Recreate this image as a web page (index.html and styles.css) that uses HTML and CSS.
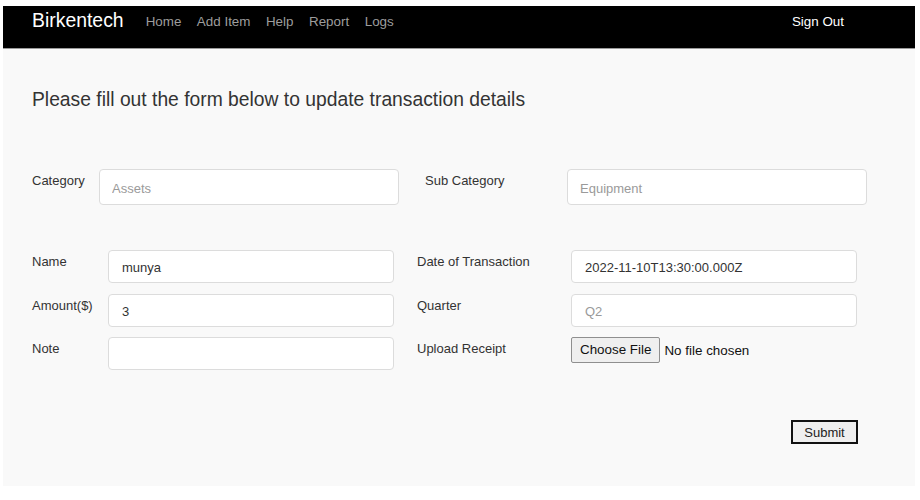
FILE: index.html
```html
<!DOCTYPE html>
<html lang="en">
<head>
<meta charset="utf-8">
<title>Birkentech - Update Transaction</title>
<link rel="stylesheet" href="styles.css">
</head>
<body>
<div class="page">
  <nav class="navbar">
    <a class="brand" href="#">Birkentech</a>
    <ul class="nav-links">
      <li><a href="#">Home</a></li>
      <li><a href="#">Add Item</a></li>
      <li><a href="#">Help</a></li>
      <li><a href="#">Report</a></li>
      <li><a href="#">Logs</a></li>
    </ul>
    <a class="signout" href="#">Sign Out</a>
  </nav>
  <main class="content">
    <h1 class="title">Please fill out the form below to update transaction details</h1>
    <form class="form">
      <div class="row row-top">
        <label class="lbl">Category</label>
        <input class="field" type="text" placeholder="Assets">
        <label class="lbl">Sub Category</label>
        <input class="field" type="text" placeholder="Equipment">
      </div>
      <div class="rows">
        <div class="row row-main">
          <label class="lbl">Name</label>
          <input class="field" type="text" value="munya">
          <label class="lbl">Date of Transaction</label>
          <input class="field" type="text" value="2022-11-10T13:30:00.000Z">
        </div>
        <div class="row row-main">
          <label class="lbl">Amount($)</label>
          <input class="field" type="text" value="3">
          <label class="lbl">Quarter</label>
          <input class="field" type="text" placeholder="Q2">
        </div>
        <div class="row row-main">
          <label class="lbl">Note</label>
          <input class="field" type="text">
          <label class="lbl">Upload Receipt</label>
          <div class="file">
            <span class="file-btn">Choose File</span>
            <span class="file-text">No file chosen</span>
          </div>
        </div>
      </div>
      <div class="actions">
        <button class="submit" type="button">Submit</button>
      </div>
    </form>
  </main>
</div>
</body>
</html>
```

FILE: styles.css
```css
* { box-sizing: border-box; }

html, body {
  margin: 0;
  padding: 0;
  background: #ffffff;
}

body {
  font-family: "Liberation Sans", Arial, sans-serif;
  color: #333333;
}

.page {
  padding: 6px 5px 14px 3px;
}

.navbar {
  height: 43px;
  background: #000000;
  display: flex;
  align-items: center;
  padding: 0 0 0 29px;
  border-bottom: 1px solid #9a9a9a;
}

.brand {
  color: #ffffff;
  text-decoration: none;
  font-size: 19.4px;
  margin-top: -13px;
}

.nav-links {
  list-style: none;
  display: flex;
  margin: -12px 0 0 22px;
  padding: 0;
}

.nav-links li a {
  color: #9d9d9d;
  text-decoration: none;
  font-size: 13.4px;
  margin-right: 15.5px;
}

.signout {
  margin-left: auto;
  margin-right: 71px;
  margin-top: -12px;
  color: #ffffff;
  text-decoration: none;
  font-size: 13.4px;
}

.content {
  background: #f9f9f9;
  padding: 39px 0 42px 29px;
  height: 437px;
}

.title {
  margin: 0;
  font-size: 19.3px;
  font-weight: normal;
  line-height: 24px;
  color: #333333;
}

.form {
  margin-top: 57px;
}

.row {
  display: grid;
  align-items: start;
}

.row-top {
  grid-template-columns: 67px 300px 26px 142px 300px;
}
.row-top > :nth-child(3) { grid-column: 4; }

.rows {
  margin-top: 45px;
  display: flex;
  flex-direction: column;
  gap: 10.5px;
}

.row-main {
  grid-template-columns: 76px 286px 23px 154px 286px;
}
.row-main > :nth-child(3) { grid-column: 4; }

.lbl {
  font-size: 13px;
  line-height: 16px;
  padding-top: 4px;
  color: #333333;
}

.row-top .lbl { padding-top: 4px; }

.field {
  font-family: "Liberation Sans", Arial, sans-serif;
  font-size: 13px;
  color: #333333;
  background: #ffffff;
  border: 1px solid #dcdcdc;
  border-radius: 4px;
  padding: 0 13px;
  margin: 0;
  outline: none;
}

.row-top .field { height: 36px; padding: 2px 12px 0 12px; }
.row-main .field { height: 33px; padding-top: 2px; }

.field::placeholder { color: #9a9a9a; }

.file {
  display: flex;
  align-items: center;
  gap: 4px;
  font-size: 13.4px;
}

.file-btn {
  display: inline-block;
  height: 26px;
  line-height: 24px;
  padding: 0 8px;
  background: #efefef;
  border: 1px solid #8f8f8f;
  border-radius: 2px;
  color: #111111;
  font-size: 13.4px;
}

.file-text { color: #111111; }

.actions {
  display: flex;
  justify-content: flex-end;
  margin-top: 50px;
  width: 826px;
}

.submit {
  font-family: "Liberation Sans", Arial, sans-serif;
  font-size: 13px;
  color: #222222;
  background: #efefef;
  border: 2px solid #111111;
  border-radius: 0;
  width: 67px;
  height: 24px;
  padding: 0;
}
```
